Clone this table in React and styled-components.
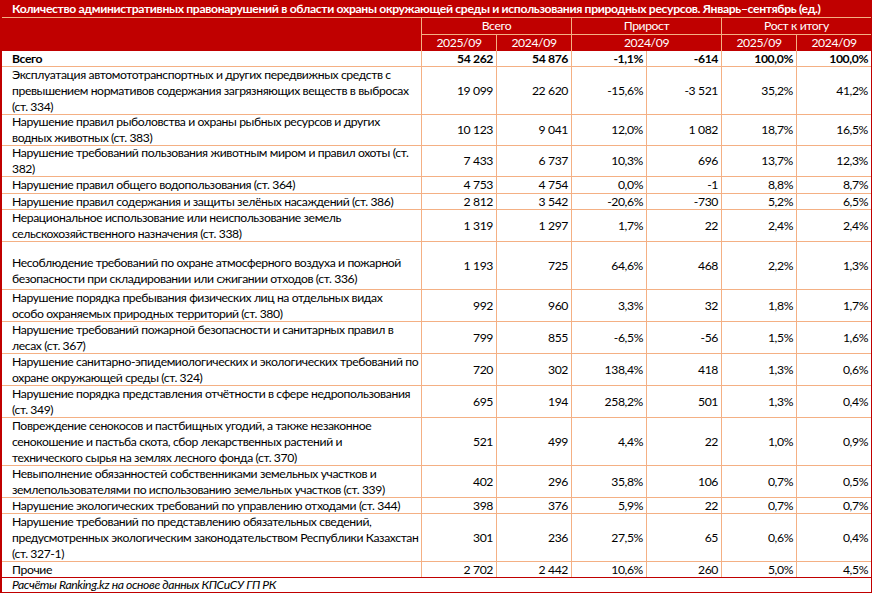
import React from 'react';
import styled, { createGlobalStyle } from 'styled-components';

const RED = '#c00000';
const LINE = '#f4b084';

const GlobalStyle = createGlobalStyle`
  html, body {
    margin: 0;
    padding: 0;
    background: #ffffff;
  }
  body {
    font-family: Lato, "Liberation Sans", sans-serif;
    font-size: 12.2px;
    letter-spacing: -0.4px;
    color: #000;
  }
`;

const rows = [
  {
    label: [
      'Эксплуатация автомототранспортных и других передвижных средств с',
      'превышением нормативов содержания загрязняющих веществ в выбросах',
      '(ст. 334)',
    ],
    values: ['19 099', '22 620', '-15,6%', '-3 521', '35,2%', '41,2%'],
    h: 48,
  },
  {
    label: ['Нарушение правил рыболовства и охраны рыбных ресурсов и других', 'водных животных (ст. 383)'],
    values: ['10 123', '9 041', '12,0%', '1 082', '18,7%', '16,5%'],
    h: 31,
  },
  {
    label: ['Нарушение требований пользования животным миром и правил охоты (ст.', '382)'],
    values: ['7 433', '6 737', '10,3%', '696', '13,7%', '12,3%'],
    h: 31,
  },
  {
    label: ['Нарушение правил общего водопользования (ст. 364)'],
    values: ['4 753', '4 754', '0,0%', '-1', '8,8%', '8,7%'],
    h: 17,
  },
  {
    label: ['Нарушение правил содержания и защиты зелёных насаждений (ст. 386)'],
    values: ['2 812', '3 542', '-20,6%', '-730', '5,2%', '6,5%'],
    h: 16,
  },
  {
    label: ['Нерациональное использование или неиспользование земель', 'сельскохозяйственного назначения (ст. 338)'],
    values: ['1 319', '1 297', '1,7%', '22', '2,4%', '2,4%'],
    h: 32,
  },
  {
    label: [
      'Несоблюдение требований по охране атмосферного воздуха и пожарной',
      'безопасности при складировании или сжигании отходов (ст. 336)',
    ],
    values: ['1 193', '725', '64,6%', '468', '2,2%', '1,3%'],
    h: 48,
    bottom: true,
  },
  {
    label: ['Нарушение порядка пребывания физических лиц на отдельных видах', 'особо охраняемых природных территорий (ст. 380)'],
    values: ['992', '960', '3,3%', '32', '1,8%', '1,7%'],
    h: 32,
  },
  {
    label: ['Нарушение требований пожарной безопасности и санитарных правил в', 'лесах (ст. 367)'],
    values: ['799', '855', '-6,5%', '-56', '1,5%', '1,6%'],
    h: 32,
  },
  {
    label: ['Нарушение санитарно-эпидемиологических и экологических требований по', 'охране окружающей среды (ст. 324)'],
    values: ['720', '302', '138,4%', '418', '1,3%', '0,6%'],
    h: 32,
  },
  {
    label: ['Нарушение порядка представления отчётности в сфере недропользования', '(ст. 349)'],
    values: ['695', '194', '258,2%', '501', '1,3%', '0,4%'],
    h: 32,
  },
  {
    label: [
      'Повреждение сенокосов и пастбищных угодий, а также незаконное',
      'сенокошение и пастьба скота, сбор лекарственных растений и',
      'технического сырья на землях лесного фонда (ст. 370)',
    ],
    values: ['521', '499', '4,4%', '22', '1,0%', '0,9%'],
    h: 48,
  },
  {
    label: ['Невыполнение обязанностей собственниками земельных участков и', 'землепользователями по использованию земельных участков (ст. 339)'],
    values: ['402', '296', '35,8%', '106', '0,7%', '0,5%'],
    h: 32,
  },
  {
    label: ['Нарушение экологических требований по управлению отходами (ст. 344)'],
    values: ['398', '376', '5,9%', '22', '0,7%', '0,7%'],
    h: 16,
  },
  {
    label: [
      'Нарушение требований по представлению обязательных сведений,',
      'предусмотренных экологическим законодательством Республики Казахстан',
      '(ст. 327-1)',
    ],
    values: ['301', '236', '27,5%', '65', '0,6%', '0,4%'],
    h: 48,
  },
  {
    label: ['Прочие'],
    values: ['2 702', '2 442', '10,6%', '260', '5,0%', '4,5%'],
    h: 16,
  },
];

const App = () => {
  return (
    <>
      <GlobalStyle />
      <Sheet>
        <Title>
          Количество административных правонарушений в области охраны окружающей среды и использования природных
          ресурсов. Январь–сентябрь (ед.)
        </Title>
        <Header>
          <HeadBlank />
          <HeadCell $span={2}>Всего</HeadCell>
          <HeadCell $span={2}>Прирост</HeadCell>
          <HeadCell $span={2} $last>
            Рост к итогу
          </HeadCell>
          <HeadCell $sub>2025/09</HeadCell>
          <HeadCell $sub>2024/09</HeadCell>
          <HeadCell $sub $span={2}>
            2024/09
          </HeadCell>
          <HeadCell $sub>2025/09</HeadCell>
          <HeadCell $sub $last>
            2024/09
          </HeadCell>
        </Header>

        <Row $h={16} $bold>
          <Label>Всего</Label>
          {['54 262', '54 876', '-1,1%', '-614', '100,0%', '100,0%'].map((v, i) => (
            <Num key={i} $last={i === 5}>
              {v}
            </Num>
          ))}
        </Row>

        {rows.map((r, idx) => (
          <Row key={idx} $h={r.h}>
            <Label $bottom={r.bottom}>
              {r.label.map((line, j) => (
                <Line key={j}>{line}</Line>
              ))}
            </Label>
            {r.values.map((v, i) => (
              <Num key={i} $last={i === 5}>
                {v}
              </Num>
            ))}
          </Row>
        ))}

        <Source>Расчёты Ranking.kz на основе данных КПСиСУ ГП РК</Source>
      </Sheet>
    </>
  );
};

export default App;

const Sheet = styled.div`
  width: 872px;
  box-sizing: border-box;
  border-left: 2px solid ${RED};
  border-right: 1px solid ${RED};
  display: flex;
  flex-direction: column;
  line-height: 16px;
`;

const Title = styled.div`
  height: 18px;
  box-sizing: border-box;
  background: ${RED};
  color: #fff;
  font-weight: 700;
  letter-spacing: -0.35px;
  padding: 1px 0 0 10px;
  white-space: nowrap;
  border-bottom: 1px solid ${LINE};
`;

const Header = styled.div`
  display: grid;
  grid-template-columns: 420px repeat(5, 75px) 74px;
  grid-template-rows: 17px 16px;
  background: ${RED};
  color: #fff;
`;

const HeadBlank = styled.div`
  grid-row: span 2;
  border-right: 1px solid ${LINE};
`;

const HeadCell = styled.div`
  grid-column: span ${(p) => p.$span || 1};
  display: flex;
  align-items: center;
  justify-content: center;
  box-sizing: border-box;
  border-right: ${(p) => (p.$last ? 'none' : `1px solid ${LINE}`)};
  border-bottom: ${(p) => (p.$sub ? 'none' : `1px solid ${LINE}`)};
  white-space: nowrap;
`;

const Row = styled.div`
  display: grid;
  grid-template-columns: 420px repeat(5, 75px) 74px;
  height: ${(p) => p.$h}px;
  box-sizing: border-box;
  border-bottom: 1px solid ${LINE};
  font-weight: ${(p) => (p.$bold ? 700 : 400)};
  background: #fff;
`;

const Label = styled.div`
  display: flex;
  flex-direction: column;
  justify-content: ${(p) => (p.$bottom ? 'flex-end' : 'center')};
  padding: 0 0 ${(p) => (p.$bottom ? '2px' : '0')} 10px;
  border-right: 1px solid ${LINE};
  white-space: nowrap;
  overflow: hidden;
`;

const Line = styled.span`
  display: block;
`;

const Num = styled.div`
  display: flex;
  align-items: center;
  justify-content: flex-end;
  padding-right: 3px;
  border-right: ${(p) => (p.$last ? 'none' : `1px solid ${LINE}`)};
  white-space: nowrap;
`;

const Source = styled.div`
  height: 16px;
  box-sizing: border-box;
  border-top: 1px solid ${RED};
  border-bottom: 1px solid ${RED};
  margin-top: -1px;
  padding-left: 10px;
  font-style: italic;
  line-height: 14px;
  white-space: nowrap;
`;
